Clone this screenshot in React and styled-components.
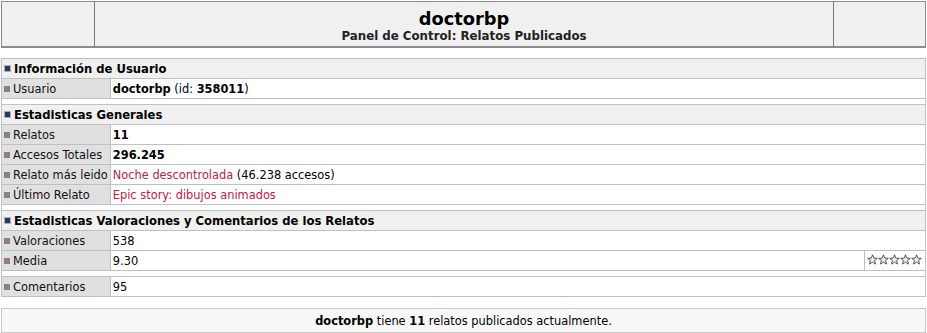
import React from "react";
import styled, { createGlobalStyle } from "styled-components";

const GlobalStyle = createGlobalStyle`
  body {
    margin: 0;
    padding: 1px;
    background: #ffffff;
    font-family: "DejaVu Sans", Verdana, sans-serif;
    font-size: 11.4px;
    color: #000;
  }
`;

const Header = styled.div`
  display: grid;
  grid-template-columns: 92px 1fr 92px;
  height: 44px;
  border: 1px solid #8c8c8c;
  border-bottom-width: 2px;
  background: #f0f0f0;
  box-sizing: content-box;

  > div + div {
    border-left: 1px solid #7a7a7a;
  }
`;

const HeaderTitle = styled.div`
  display: flex;
  flex-direction: column;
  align-items: center;
  justify-content: center;
  padding-top: 3px;

  h1 {
    margin: 0;
    font-size: 17.8px;
    line-height: 21px;
    font-weight: bold;
  }
  h2 {
    margin: 0;
    font-size: 11.8px;
    line-height: 15px;
    font-weight: bold;
    color: #222;
  }
`;

const Table = styled.table`
  width: 925px;
  margin-top: 10px;
  border-collapse: collapse;
  border: 1px solid #c0c0c0;

  td {
    border: 1px solid #c0c0c0;
    padding: 0 2px;
    height: 19px;
    white-space: nowrap;
  }
`;

const SectionCell = styled.td`
  background: #f0f0f0;
  font-weight: bold;
  font-size: 11.6px;
`;

const LabelCell = styled.td`
  width: 103px;
  background: #e0e0e0;
  color: #111;
`;

const ValueCell = styled.td`
  background: #fff;
  font-weight: ${(p) => (p.$bold ? "bold" : "normal")};
`;

const StarsCell = styled.td`
  width: 56px;
  background: #fff;
`;

const SpacerRow = styled.tr`
  td {
    height: 5px;
    padding: 0;
    background: #fff;
  }
`;

const Bullet = styled.span`
  display: inline-block;
  width: ${(p) => (p.$section ? "5px" : "6px")};
  height: ${(p) => (p.$section ? "5px" : "6px")};
  margin-right: 3px;
  vertical-align: 1px;
  background: ${(p) => (p.$section ? "#2e3a52" : "#8c8084")};
  border: ${(p) => (p.$section ? "1px solid #a8b0c0" : "none")};
`;

const StoryLink = styled.a`
  color: #c0204a;
  text-decoration: none;
`;

const Footer = styled.div`
  margin-top: 11px;
  width: 923px;
  height: 23px;
  border: 1px solid #c8c8c8;
  background: #f8f8f8;
  display: flex;
  align-items: center;
  justify-content: center;
`;

const Stars = () => (
  <svg width="56" height="11" viewBox="0 0 56 11">
    {[0, 1, 2, 3, 4].map((i) => (
      <path
        key={i}
        transform={`translate(${i * 11 + 0.5},0.5)`}
        d="M5 0.3 L6.3 3.6 L9.8 3.8 L7.1 6 L8 9.6 L5 7.6 L2 9.6 L2.9 6 L0.2 3.8 L3.7 3.6 Z"
        fill="#e8eef8"
        stroke="#333"
        strokeWidth="0.8"
      />
    ))}
  </svg>
);

const Section = ({ title }) => (
  <tr>
    <SectionCell colSpan={3}>
      <Bullet $section />
      {title}
    </SectionCell>
  </tr>
);

const Row = ({ label, children, bold, stars }) => (
  <tr>
    <LabelCell>
      <Bullet />
      {label}
    </LabelCell>
    <ValueCell $bold={bold} colSpan={stars ? 1 : 2}>
      {children}
    </ValueCell>
    {stars && (
      <StarsCell>
        <Stars />
      </StarsCell>
    )}
  </tr>
);

const Spacer = () => (
  <SpacerRow>
    <td colSpan={3} />
  </SpacerRow>
);

export default function App() {
  return (
    <>
      <GlobalStyle />
      <Header>
        <div />
        <HeaderTitle>
          <h1>doctorbp</h1>
          <h2>Panel de Control: Relatos Publicados</h2>
        </HeaderTitle>
        <div />
      </Header>

      <Table>
        <tbody>
          <Section title="Información de Usuario" />
          <Row label="Usuario">
            <b>doctorbp</b> (id: <b>358011</b>)
          </Row>
          <Spacer />
          <Section title="Estadisticas Generales" />
          <Row label="Relatos" bold>
            11
          </Row>
          <Row label="Accesos Totales" bold>
            296.245
          </Row>
          <Row label="Relato más leido">
            <StoryLink href="#">Noche descontrolada</StoryLink> (46.238 accesos)
          </Row>
          <Row label="Último Relato">
            <StoryLink href="#">Epic story: dibujos animados</StoryLink>
          </Row>
          <Spacer />
          <Section title="Estadisticas Valoraciones y Comentarios de los Relatos" />
          <Row label="Valoraciones">538</Row>
          <Row label="Media" stars>
            9.30
          </Row>
          <Spacer />
          <Row label="Comentarios">95</Row>
        </tbody>
      </Table>

      <Footer>
        <span>
          <b>doctorbp</b> tiene <b>11</b> relatos publicados actualmente.
        </span>
      </Footer>
    </>
  );
}
